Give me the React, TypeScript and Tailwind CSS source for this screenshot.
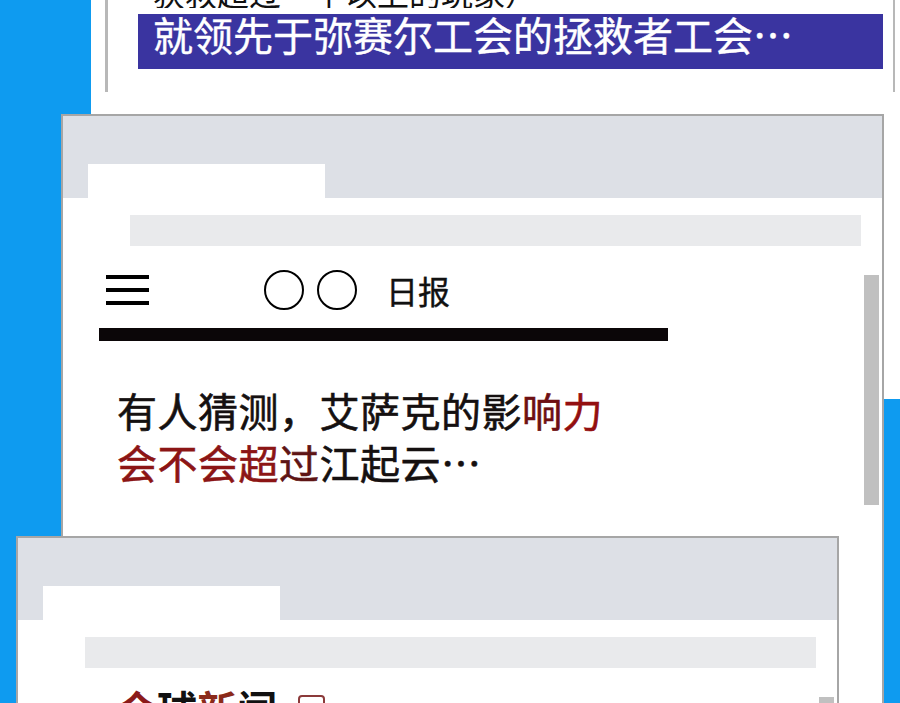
import React from "react";

const cjk = "font-['Noto_Sans_CJK_SC','Noto_Sans',sans-serif]";

function BrowserWindow({
  className,
  children,
}: {
  className: string;
  children?: React.ReactNode;
}) {
  return (
    <div
      className={`absolute w-[823px] h-[720px] border-2 border-[#a6a6a6] bg-white ${className}`}
    >
      {/* title bar with a single open tab */}
      <div className="h-[82px] bg-[#dde0e6] flex items-end pl-[25px]">
        <div className="h-[34px] w-[237px] bg-white" />
      </div>
      {/* address bar */}
      <div className="mt-[17px] ml-[67px] mr-[21px] h-[31px] bg-[#e9eaec]" />
      {children}
      {/* scrollbar thumb */}
      <div className="absolute right-[3px] top-[159px] w-[15px] h-[230px] bg-[#c0c0c0]" />
    </div>
  );
}

function Hamburger() {
  return (
    <div className="flex flex-col gap-[9px] w-[43px]">
      <div className="h-[4px] bg-black" />
      <div className="h-[4px] bg-black" />
      <div className="h-[4px] bg-black" />
    </div>
  );
}

export default function App() {
  return (
    <div className={`relative w-[900px] h-[703px] overflow-hidden bg-[#0e9bf0] ${cjk}`}>
      {/* white page behind the front window */}
      <div className="absolute left-[91px] top-0 w-[809px] h-[399px] bg-white" />

      {/* top window: caption, scrolled so only the end of the first line shows */}
      <div className="absolute left-[105px] top-0 w-[790px] h-[92px] border-l-[3px] border-r-2 border-[#b8b8b8] bg-white">
        <div className="h-[8px] overflow-hidden flex flex-col justify-end pl-[45px]">
          <div className="shrink-0 text-[32px] leading-[32px] text-[#111] whitespace-nowrap">
            获救超过一半以上的玩家）
          </div>
        </div>
        <div className="mt-[6px] ml-[30px] w-[745px] h-[55px] bg-[#3a34a0] pl-[15px] text-[40px] leading-[40px] text-white whitespace-nowrap [-webkit-text-stroke:0.4px_currentColor]">
          就领先于弥赛尔工会的拯救者工会…
        </div>
      </div>

      {/* middle window: daily news page */}
      <BrowserWindow className="left-[61px] top-[114px]">
        <div className="mt-[24px] pl-[43px] flex items-center h-[40px]">
          <Hamburger />
          <div className="ml-[115px] w-[40px] h-[40px] rounded-full border-2 border-black" />
          <div className="ml-[13px] w-[40px] h-[40px] rounded-full border-2 border-black" />
          <div className="ml-[29px] text-[32px] leading-none text-[#111] [-webkit-text-stroke:0.4px_currentColor]">
            日报
          </div>
        </div>
        <div className="mt-[18px] ml-[36px] w-[569px] h-[13px] bg-[#0b0608]" />
        <div className="mt-[43px] pl-[54px] text-[40px] leading-[52px] tracking-[0.5px] text-[#151010] whitespace-nowrap [-webkit-text-stroke:0.6px_currentColor]">
          <div>
            有人猜测，艾萨克的影
            <span className="text-[#6e0f12]">响</span>
            <span className="text-[#930f10]">力</span>
          </div>
          <div>
            <span className="text-[#8c1515]">会不会超</span>
            <span className="text-[#5e1414]">过</span>
            江起云…
          </div>
        </div>
      </BrowserWindow>

      {/* front window: global news page */}
      <BrowserWindow className="left-[16px] top-[536px]">
        <div className="mt-[14px] pl-[99px] flex items-center">
          <div className="text-[40px] leading-[52px] font-bold whitespace-nowrap">
            <span className="text-[#8b1a1a]">全</span>
            <span className="text-[#111]">球</span>
            <span className="text-[#8b2a1a]">新</span>
            <span className="text-[#111]">闻</span>
          </div>
          <div className="ml-[21px] w-[27px] h-[27px] rounded-[4px] border-2 border-[#8b3a3a]" />
        </div>
      </BrowserWindow>
    </div>
  );
}
